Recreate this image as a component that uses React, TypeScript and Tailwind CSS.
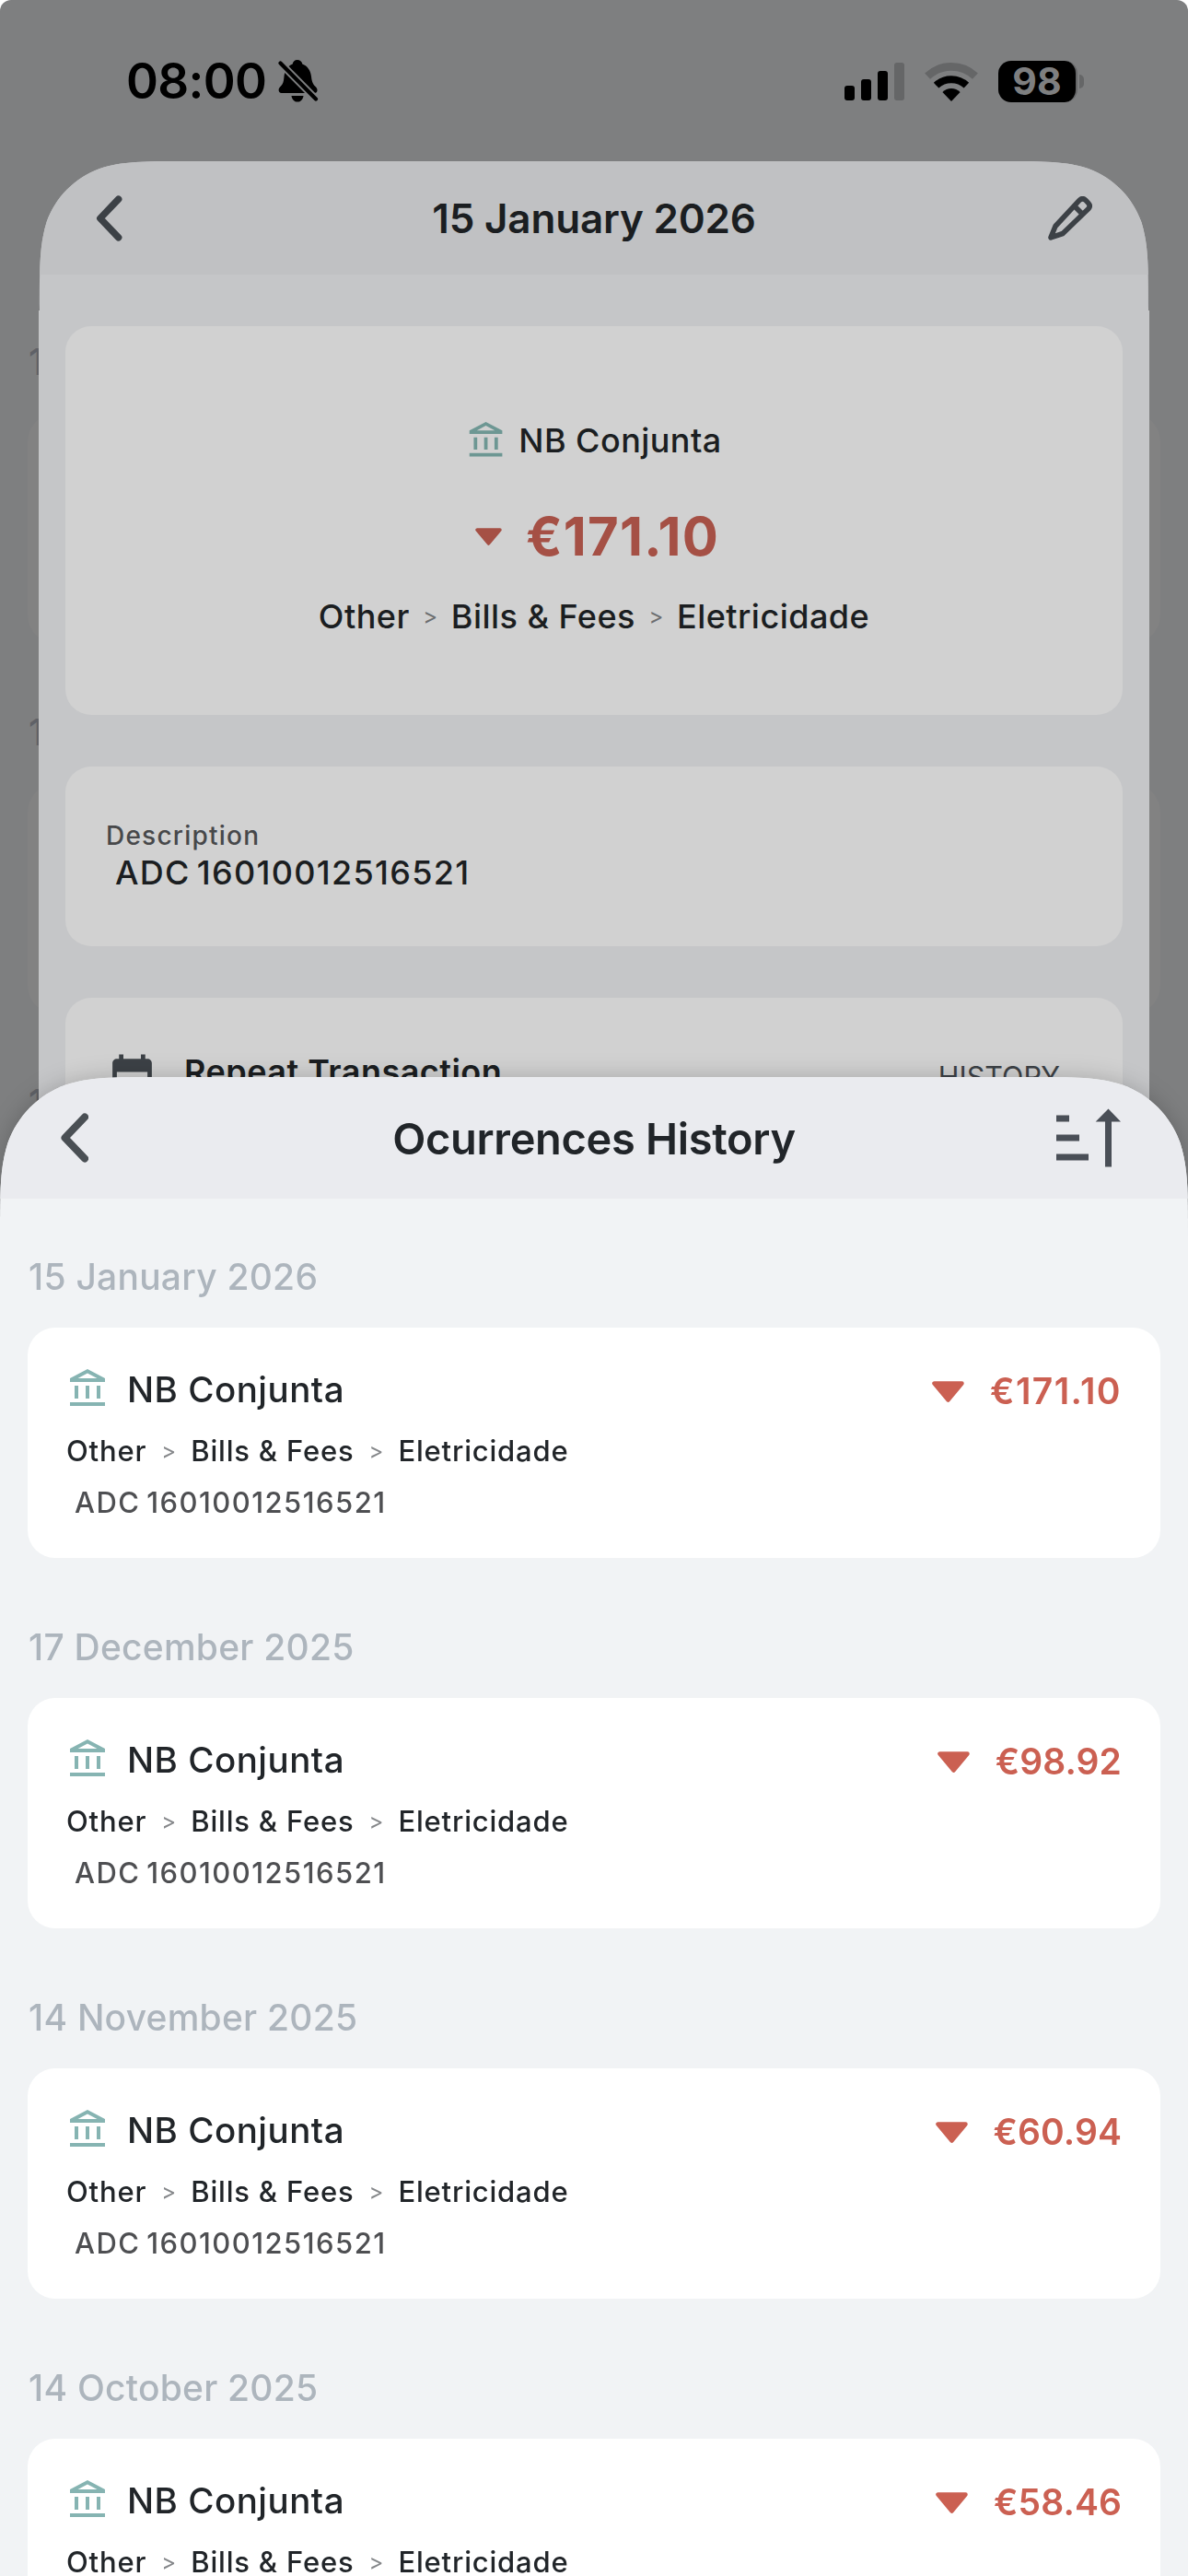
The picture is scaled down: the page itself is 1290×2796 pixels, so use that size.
import clsx from "clsx";
import { MdOutlineAccountBalance } from "react-icons/md";

type Transaction = {
  date: string;
  amount: string;
};

const transactions: Transaction[] = [
  { date: "15 January 2026", amount: "€171.10" },
  { date: "17 December 2025", amount: "€98.92" },
  { date: "14 November 2025", amount: "€60.94" },
  { date: "14 October 2025", amount: "€58.46" },
];

function BellOff() {
  return (
    <svg viewBox="0 0 44 46" className="h-[46px] w-[44px]">
      <path
        d="M20.7 0c3 0 5 1.800 5.600 4.400 5.700 2.200 9 7 9.700 13.600.6 6.400 2.200 8.800 4.800 11.300 1.400 1.400 1.700 2.600 1.700 3.700 0 2-1.200 3-3.200 3H3.800C1.700 36 .6 34.700.6 32.800c0-1.900 1-2.900 2.300-4.200 2.300-2.300 3.100-4.800 3.500-9.600.6-7.300 3.500-12.400 9.300-14.600C16.300 1.800 18 0 20.700 0z"
        fill="#000"
      />
      <path d="M14.500 39h13c-.6 4-3 6.600-6.500 6.600s-5.900-2.600-6.500-6.600z" fill="#000" />
      <path d="M-1 0 45 46.500" stroke="#7e7f80" strokeWidth="8" />
      <path d="M2.500 3.500 41 42.500" stroke="#000" strokeWidth="4.200" strokeLinecap="round" />
    </svg>
  );
}

function Wifi() {
  return (
    <svg viewBox="0 0 58 43" className="h-[43px] w-[58px]" fill="none">
      <path d="M3.100 15.700A37.700 37.700 0 0 1 54.900 15.700" stroke="#656667" strokeWidth="8.600" />
      <path d="M12.600 25.700A23.800 23.800 0 0 1 45.400 25.700" stroke="#000" strokeWidth="8" />
      <path d="M29 43 19.400 32.900A14 14 0 0 1 38.600 32.900Z" fill="#000" />
    </svg>
  );
}

function StatusBar() {
  return (
    <div className="flex h-[176px] items-center justify-between pr-[113px] pl-[137px]">
      <div className="flex items-center gap-[13px]">
        <span className="text-[53px] leading-none font-semibold tracking-[-0.013em] text-black">08:00</span>
        <BellOff />
      </div>
      <div className="flex items-center gap-[22px]">
        <div className="flex h-[42px] items-end gap-[7px]">
          <span className="h-4 w-[11px] rounded-[3px] bg-black" />
          <span className="h-[23px] w-[11px] rounded-[3px] bg-black" />
          <span className="h-8 w-[11px] rounded-[3px] bg-black" />
          <span className="h-[41px] w-[11px] rounded-[3px] bg-[#656667]" />
        </div>
        <Wifi />
        <div className="flex items-center gap-[2px]">
          <div className="flex h-[45px] w-[86px] items-center justify-center rounded-[14px] border-r-2 border-[#656667] bg-black text-[41px] leading-[45px] font-bold text-[#7e7f80]">
            98
          </div>
          <span className="h-[15px] w-[5px] rounded-r-full bg-[#656667]" />
        </div>
      </div>
    </div>
  );
}

function ChevronBack({ className }: { className?: string }) {
  return (
    <svg viewBox="0 0 30 54" className={className} fill="none">
      <path d="M26 4.500 4.500 27 26 49.500" stroke="currentColor" strokeWidth="8" strokeLinecap="round" strokeLinejoin="round" />
    </svg>
  );
}

function Pencil() {
  return (
    <svg viewBox="0 0 48 48" className="h-[48px] w-[48px] text-[#3c4146]" fill="none">
      <path
        d="M3 44.800 8 32.500 34.300 4.200q3.200-3 6.400 0l3 3.200q3 3.200 0 6.400L16 40.500Z"
        stroke="currentColor"
        strokeWidth="5.600"
        strokeLinejoin="round"
      />
      <path d="m28.500 10.500 9.500 9.500" stroke="currentColor" strokeWidth="5.600" />
    </svg>
  );
}

function SortIcon() {
  return (
    <svg viewBox="0 0 70 64" className="h-[64px] w-[70px]" fill="#4a4f57">
      <path d="M0 7.500h14v7H0zM0 28.500h25v7H0zM0 49.500h35v7H0z" />
      <path d="M56.500 0.500 70 14.500H60V63.500H53V14.500H42.700z" />
    </svg>
  );
}

function CalendarIcon() {
  return (
    <svg viewBox="0 0 24 24" className="h-[57px] w-[57px] shrink-0" fill="#3c4146">
      <path d="M19 3h-1V1h-2v2H8V1H6v2H5c-1.110 0-2 .9-2 2v14c0 1.100.89 2 2 2h14c1.100 0 2-.9 2-2V5c0-1.100-.9-2-2-2zm0 16H5V9h14v10z" />
    </svg>
  );
}

function Triangle({ className }: { className?: string }) {
  return (
    <svg viewBox="0 0 35 23" className={className}>
      <path
        d="M2.500 2.500h30L17.500 20.500z"
        fill="currentColor"
        stroke="currentColor"
        strokeWidth="4.500"
        strokeLinejoin="round"
      />
    </svg>
  );
}

function Categories({ sepClass }: { sepClass: string }) {
  return (
    <>
      <span>Other</span>
      <span className={clsx("text-center text-[24px] font-normal tracking-normal", sepClass)}>&gt;</span>
      <span>Bills &amp; Fees</span>
      <span className={clsx("text-center text-[24px] font-normal tracking-normal", sepClass)}>&gt;</span>
      <span>Eletricidade</span>
    </>
  );
}

function TransactionItem({ date, amount }: Transaction) {
  // amounts with several 1s set narrower, so they get wider tracking
  const narrow = amount.split("1").length > 2;

  return (
    <section className="mb-[55px]">
      <h2 className="mb-[14px] ml-[1px] h-[83px] text-[39px] leading-[83px] font-medium tracking-[0.006em] text-[#adb5bd]">{date}</h2>
      <div className="h-[250px] rounded-[30px] bg-white pt-[43px] pr-[42px] pl-[42px]">
        <div className="flex h-12 items-center">
          <MdOutlineAccountBalance className="size-12 text-[#86b4b2]" />
          <span className="ml-[18px] text-[38.5px] leading-[48px] font-medium tracking-[0.013em] text-[#212529]">NB Conjunta</span>
          <div className="mt-1 ml-auto flex items-center text-[#cb6052]">
            <Triangle className="h-[23px] w-[35px]" />
            <span className={clsx("ml-7 text-[39px] leading-[48px] font-semibold", narrow ? "tracking-[0.036em]" : "tracking-[0.002em]")}>
              {amount}
            </span>
          </div>
        </div>
        <div className="mt-[25px] flex h-9 items-center text-[31px] leading-9 font-medium tracking-[0.026em] text-[#212529]">
          <Categories sepClass="w-[48px] text-[#85878a]" />
        </div>
        <p className="mt-5 ml-[9px] h-9 text-[31px] leading-9 font-medium tracking-[0.047em] text-[#4e4f52] [word-spacing:-3px]">
          ADC 16010012516521
        </p>
      </div>
    </section>
  );
}

// Dimmed list that peeks out on both sides of the detail sheet
function DimmedList() {
  return (
    <div className="px-[30px] pt-[175px]">
      {["a", "b", "c"].map((key) => (
        <div key={key} className="mb-[55px]">
          <div className="mb-[14px] ml-[1px] h-[84px] text-[39px] leading-[84px] font-medium text-[#5f6167]">1</div>
          <div className="h-[249px] rounded-[30px] bg-[#828282]" />
        </div>
      ))}
    </div>
  );
}

function DetailSheet() {
  return (
    <div className="absolute top-[175px] left-[42px] h-[1100px] w-[1206px] bg-[#c5c6c8] [clip-path:path('M0_1100V162H1C1_114_1_91_8.5_66.3C18_39_39_18_66.3_7.9C91_0_114_0_160_0H1046C1092_0_1115_0_1139.7_7.9C1167_18_1188_39_1197.5_66.3C1205_91_1205_114_1205_162H1206V1100Z')]">
      <header className="flex h-[123px] items-center justify-between bg-[#c0c1c3] pr-[62px] pl-[62px]">
        <div className="w-[48px]">
          <ChevronBack className="h-[50px] w-[29px] text-[#3c4146]" />
        </div>
        <h1 className="text-[44px] leading-none font-semibold tracking-[-0.0045em] text-[#1b1e21]">15 January 2026</h1>
        <Pencil />
      </header>

      <main className="flex flex-col gap-[56px] px-[29px] pt-[56px]">
        <div className="flex h-[422px] flex-col items-center rounded-[28px] bg-[#d1d1d1] pt-[102px]">
          <div className="flex h-[45px] items-center gap-3">
            <MdOutlineAccountBalance className="size-[45px] text-[#6d9793]" />
            <span className="text-[36px] leading-[45px] font-medium tracking-[0.012em] text-[#1b1e21]">NB Conjunta</span>
          </div>
          <div className="mt-[46px] flex h-[70px] items-center text-[#a55045]">
            <div className="flex w-11 justify-center">
              <Triangle className="h-[19px] w-[29px]" />
            </div>
            <span className="ml-[18px] text-[58px] leading-[70px] font-bold tracking-[0.021em]">€171.10</span>
          </div>
          <div className="mt-8 flex h-10 items-center text-[36px] leading-10 font-medium tracking-[0.013em] text-[#1b1e21]">
            <Categories sepClass="w-[45px] text-[#6c6e70]" />
          </div>
        </div>

        <div className="h-[195px] rounded-[28px] bg-[#d1d1d1] pt-[58px] pl-11">
          <p className="text-[28px] leading-[34px] font-medium tracking-[0.044em] text-[#47484a]">Description</p>
          <p className="ml-[10px] text-[36px] leading-[46px] font-medium tracking-[0.036em] text-[#1b1e21] [word-spacing:-4px]">
            ADC 16010012516521
          </p>
        </div>

        <div className="h-[300px] rounded-[28px] bg-[#d1d1d1] pt-[59px] pr-[68px] pl-11">
          <div className="flex items-center">
            <CalendarIcon />
            <span className="mb-[14px] ml-7 text-[36px] leading-[43px] font-semibold tracking-[0.013em] text-[#1b1e21]">
              Repeat Transaction
            </span>
            <span className="mb-1 ml-auto text-[30.5px] leading-9 text-[#3c4146]">HISTORY</span>
          </div>
        </div>
      </main>
    </div>
  );
}

function HistorySheet() {
  return (
    <div className="absolute top-[1169px] left-0 drop-shadow-[0_0_12px_rgba(0,0,0,0.2)]">
      <div className="h-[1627px] w-[1290px] overflow-hidden bg-[#f1f3f5] [clip-path:path('M0_1627V173C0_123_0_98_8.5_71.4C19_42_42_19_71.4_8.5C98_0_123_0_173_0H1117C1167_0_1192_0_1218.6_8.5C1248_19_1271_42_1281.5_71.4C1290_98_1290_123_1290_173V1627Z')]">
        <header className="flex h-[132px] items-center justify-between bg-[#eaebef] pr-[73px] pl-[66px]">
          <div className="w-[77px]">
            <ChevronBack className="h-[54px] w-[30px] text-[#4a4f54]" />
          </div>
          <h1 className="text-[47px] leading-none font-semibold tracking-[-0.007em] text-[#212529]">Ocurrences History</h1>
          <SortIcon />
        </header>
        <div className="px-[30px] pt-[43px]">
          {transactions.map((t) => (
            <TransactionItem key={t.date} {...t} />
          ))}
        </div>
      </div>
    </div>
  );
}

export default function App() {
  return (
    <div className="relative h-[2796px] w-[1290px] overflow-hidden rounded-t-[12px] bg-[#7e7f80] font-['Inter',sans-serif]">
      <StatusBar />
      <DimmedList />
      <DetailSheet />
      <HistorySheet />
    </div>
  );
}
